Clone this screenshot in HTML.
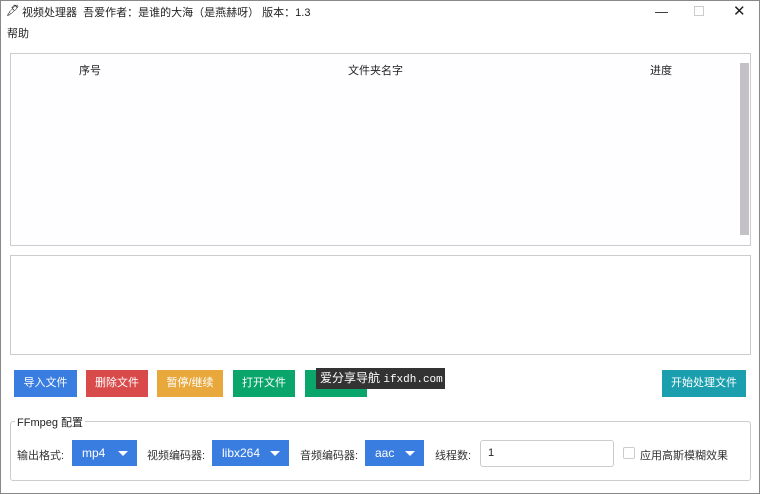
<!DOCTYPE html>
<html><head><meta charset="utf-8"><style>
*{margin:0;padding:0;box-sizing:border-box}
body{width:760px;height:494px;background:#fff;font-family:"Liberation Sans","Noto Sans CJK SC",sans-serif;font-size:11px;color:#222;position:relative;overflow:hidden}
.a{position:absolute;white-space:nowrap}
.btn{position:absolute;top:370px;height:27px;color:#fff;font-size:11px;text-align:center;line-height:27px}
.sel{position:absolute;top:440px;height:26px;background:#3a7de0;color:#fff;font-size:12px;line-height:26px;padding-left:10px}
.sel:after{content:"";position:absolute;right:9px;top:11px;border-left:5px solid transparent;border-right:5px solid transparent;border-top:5px solid #fff}
.lb{position:absolute;top:447px;font-size:11px;color:#333;white-space:nowrap}
</style></head><body>
<div class="a" style="left:0;top:0;width:760px;height:494px;border:1px solid #888"></div>
<div class="a" style="left:6px;top:4px;font-size:11px">&#x1F58B;</div>
<div class="a" style="left:22px;top:4px;font-size:11px">视频处理器&nbsp; 吾爱作者：是谁的大海（是燕赫呀） 版本：1.3</div>
<div class="a" style="left:655px;top:4px;font-size:13px">—</div>
<div class="a" style="left:694px;top:6px;width:10px;height:10px;border:1px solid #ccc"></div>
<div class="a" style="left:733px;top:2px;font-size:15px">✕</div>
<div class="a" style="left:7px;top:25px">帮助</div>
<div class="a" style="left:10px;top:53px;width:741px;height:193px;border:1px solid #ccc;background:#fefdff"></div>
<div class="a" style="left:79px;top:62px">序号</div>
<div class="a" style="left:348px;top:62px">文件夹名字</div>
<div class="a" style="left:650px;top:62px">进度</div>
<div class="a" style="left:740px;top:63px;width:9px;height:172px;background:#c3c0c6"></div>
<div class="a" style="left:10px;top:255px;width:741px;height:100px;border:1px solid #ccc"></div>
<div class="btn" style="left:14px;width:63px;background:#3a7de0">导入文件</div>
<div class="btn" style="left:86px;width:62px;background:#d94a4a">删除文件</div>
<div class="btn" style="left:157px;width:66px;background:#e8a83c">暂停/继续</div>
<div class="btn" style="left:233px;width:62px;background:#0aa56a">打开文件</div>
<div class="btn" style="left:305px;width:62px;background:#0aa56a"></div>
<div class="a" style="left:316px;top:368px;width:129px;height:21px;background:#333;color:#fff;font-size:12px;line-height:21px;padding-left:4px;overflow:hidden">爱分享导航 <span style="font-family:'Liberation Mono',monospace;font-size:11px">ifxdh.com</span></div>
<div class="btn" style="left:662px;width:84px;background:#1b9fae">开始处理文件</div>
<div class="a" style="left:10px;top:421px;width:741px;height:60px;border:1px solid #ccc;border-radius:3px"></div>
<div class="a" style="left:15px;top:414px;background:#fff;padding:0 2px;font-size:11px">FFmpeg 配置</div>
<div class="lb" style="left:17px">输出格式:</div>
<div class="sel" style="left:72px;width:65px">mp4</div>
<div class="lb" style="left:147px">视频编码器:</div>
<div class="sel" style="left:212px;width:77px">libx264</div>
<div class="lb" style="left:300px">音频编码器:</div>
<div class="sel" style="left:365px;width:59px">aac</div>
<div class="lb" style="left:435px">线程数:</div>
<div class="a" style="left:480px;top:440px;width:134px;height:27px;border:1px solid #ccc;border-radius:3px;padding:6px 7px;font-size:11px">1</div>
<div class="a" style="left:623px;top:447px;width:12px;height:12px;border:1px solid #ccc;border-radius:2px"></div>
<div class="lb" style="left:640px">应用高斯模糊效果</div>
</body></html>
